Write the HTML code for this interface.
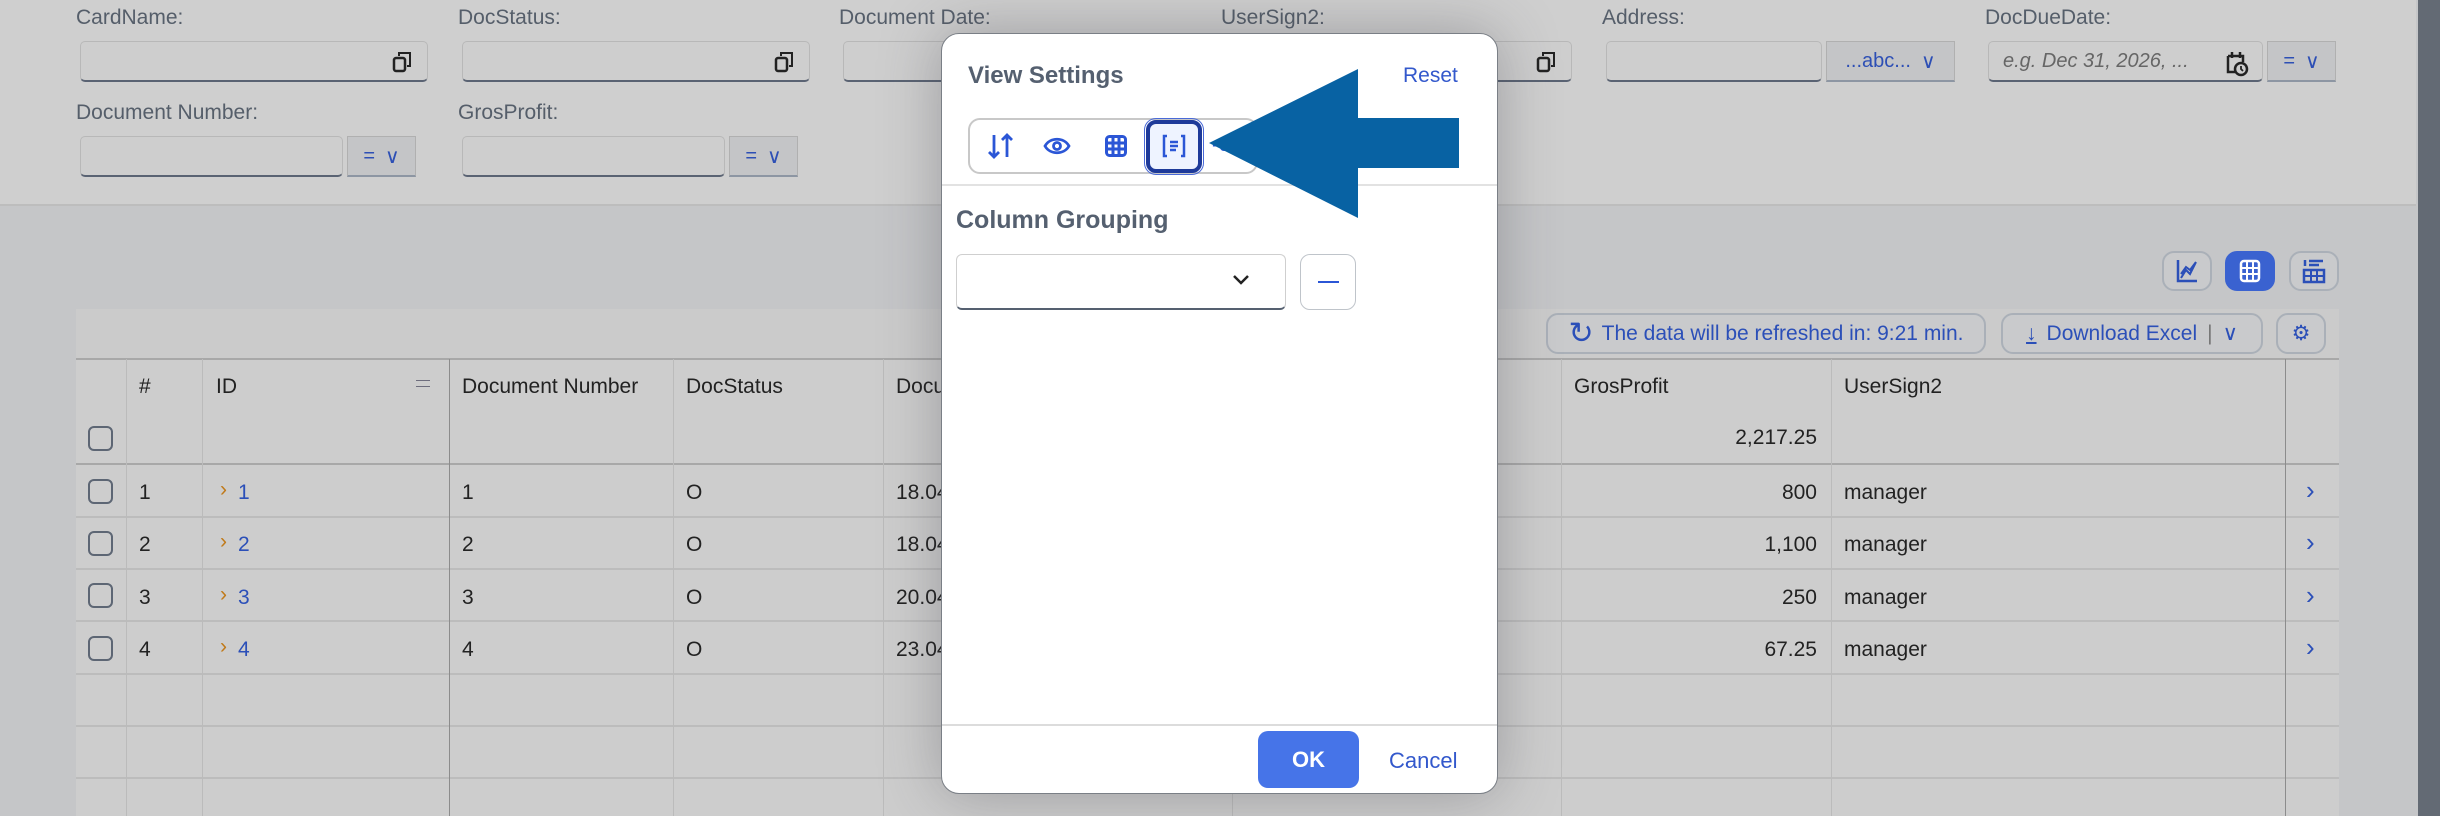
<!DOCTYPE html>
<html><head><meta charset="utf-8"><style>
*{box-sizing:border-box;margin:0;padding:0}
body{width:2440px;height:816px;overflow:hidden;position:relative;background:#c5c6c8;font-family:"Liberation Sans",sans-serif;font-size:21px;color:#222}
.a{position:absolute}
.lbl{position:absolute;color:#555e6a;font-size:21px;line-height:24px}
.inp{position:absolute;height:41px;border:1px solid #b8b8b8;border-bottom:2px solid #5a6373;border-radius:5px;background:#cecece}
.btn{position:absolute;height:41px;border:1px solid #b0b0b0;border-bottom:2px solid #8d96a3;background:#c4c5c7;color:#2d4fb5;font-size:20px;display:flex;align-items:center;justify-content:center;gap:10px}
.cell{position:absolute;line-height:24px}
.hl{position:absolute;height:2px;background:#bcbcbc}
.vl{position:absolute;width:1px;background:#bbb}
.cb{position:absolute;width:25px;height:25px;border:2px solid #5d6674;border-radius:6px}
.blue{color:#2b4fb8}
.tb{position:absolute;border:2px solid #aab0b8;border-radius:12px;background:#c9cacc;color:#2b4fb8;display:flex;align-items:center;justify-content:center;font-size:21px}
</style></head><body>
<!-- filter bar -->
<div class="a" style="left:0;top:0;width:2416px;height:206px;background:#cfcfcf;border-bottom:2px solid #bdbdbd"></div>
<div class="a" style="left:2418px;top:0;width:22px;height:816px;background:#636a74"></div>
<div class="lbl" style="left:76px;top:6px">CardName:</div>
<div class="inp" style="left:80px;top:41px;width:348px"></div>
<svg class="a" style="left:392px;top:50px" width="22" height="24" viewBox="0 0 22 24"><rect x="2" y="8" width="11" height="13" rx="2" fill="none" stroke="#222" stroke-width="2.5"/><path d="M7 6V3h11v13h-3" fill="none" stroke="#222" stroke-width="2"/></svg>
<div class="lbl" style="left:458px;top:6px">DocStatus:</div>
<div class="inp" style="left:462px;top:41px;width:348px"></div>
<svg class="a" style="left:774px;top:50px" width="22" height="24" viewBox="0 0 22 24"><rect x="2" y="8" width="11" height="13" rx="2" fill="none" stroke="#222" stroke-width="2.5"/><path d="M7 6V3h11v13h-3" fill="none" stroke="#222" stroke-width="2"/></svg>
<div class="lbl" style="left:839px;top:6px">Document Date:</div>
<div class="inp" style="left:843px;top:41px;width:348px"></div>
<div class="lbl" style="left:1221px;top:6px">UserSign2:</div>
<div class="inp" style="left:1225px;top:41px;width:347px"></div>
<svg class="a" style="left:1536px;top:50px" width="22" height="24" viewBox="0 0 22 24"><rect x="2" y="8" width="11" height="13" rx="2" fill="none" stroke="#222" stroke-width="2.5"/><path d="M7 6V3h11v13h-3" fill="none" stroke="#222" stroke-width="2"/></svg>
<div class="lbl" style="left:1602px;top:6px">Address:</div>
<div class="inp" style="left:1606px;top:41px;width:216px"></div>
<div class="btn" style="left:1826px;top:41px;width:129px">...abc... <span>&#8744;</span></div>
<div class="lbl" style="left:1985px;top:6px">DocDueDate:</div>
<div class="inp" style="left:1988px;top:41px;width:275px"></div>
<div class="a" style="left:2003px;top:50px;font-style:italic;color:#666;font-size:20px">e.g. Dec 31, 2026, ...</div>
<svg class="a" style="left:2224px;top:48px" width="26" height="30" viewBox="0 0 26 30"><path d="M4 8h15v6M4 8v16h7" fill="none" stroke="#222" stroke-width="2.5"/><path d="M8 4v6M16 4v6" stroke="#222" stroke-width="2.5"/><circle cx="17" cy="21" r="6" fill="none" stroke="#222" stroke-width="2.5"/><path d="M17 18v3l2 2" fill="none" stroke="#222" stroke-width="1.8"/></svg>
<div class="btn" style="left:2267px;top:41px;width:69px">= <span>&#8744;</span></div>
<div class="lbl" style="left:76px;top:101px">Document Number:</div>
<div class="inp" style="left:80px;top:136px;width:263px"></div>
<div class="btn" style="left:347px;top:136px;width:69px">= <span>&#8744;</span></div>
<div class="lbl" style="left:458px;top:101px">GrosProfit:</div>
<div class="inp" style="left:462px;top:136px;width:263px"></div>
<div class="btn" style="left:729px;top:136px;width:69px">= <span>&#8744;</span></div>

<!-- view buttons -->
<div class="tb" style="left:2162px;top:251px;width:50px;height:40px"><svg width="24" height="26" viewBox="0 0 24 26"><path d="M3 2v21h19" fill="none" stroke="#2b4fb8" stroke-width="2.5"/><path d="M6 20l5-8 4 4 6-12M6 16l5-7 4 3 6-8" fill="none" stroke="#2b4fb8" stroke-width="2"/></svg></div>
<div class="tb" style="left:2225px;top:251px;width:50px;height:40px;background:#3a62d0;border-color:#3a62d0"><svg width="22" height="24" viewBox="0 0 22 24"><rect x="2" y="2" width="18" height="20" rx="3" fill="none" stroke="#fff" stroke-width="2.5"/><path d="M8 3v18M14 3v18M3 9h16M3 15h16" stroke="#fff" stroke-width="2"/></svg></div>
<div class="tb" style="left:2289px;top:251px;width:50px;height:40px"><svg width="24" height="26" viewBox="0 0 24 26"><path d="M3 2v6M7 3h14M7 7h10" stroke="#2b4fb8" stroke-width="2.5"/><rect x="2" y="12" width="20" height="12" fill="none" stroke="#2b4fb8" stroke-width="2.5"/><path d="M9 12v12M15 12v12M2 18h20" stroke="#2b4fb8" stroke-width="2"/></svg></div>

<!-- table -->
<div class="a" style="left:76px;top:309px;width:2263px;height:50px;background:#cbcbcb"></div>
<div class="a" style="left:76px;top:359px;width:2263px;height:457px;background:#cdcdcd"></div>
<div class="tb" style="left:1546px;top:313px;width:440px;height:41px;gap:8px"><span style="font-size:30px">&#8635;</span>The data will be refreshed in: 9:21 min.</div>
<div class="tb" style="left:2001px;top:313px;width:262px;height:41px;gap:10px"><span style="text-decoration:underline">&#8595;</span>Download Excel <span style="color:#777">|</span> &#8744;</div>
<div class="tb" style="left:2276px;top:313px;width:50px;height:41px">&#9881;</div>
<div class="hl" style="left:76px;top:358px;width:2263px;background:#a8a8a8"></div>
<div class="hl" style="left:76px;top:463px;width:2263px;background:#a8a8a8"></div>
<div class="hl" style="left:76px;top:516px;width:2263px"></div>
<div class="hl" style="left:76px;top:568px;width:2263px"></div>
<div class="hl" style="left:76px;top:620px;width:2263px"></div>
<div class="hl" style="left:76px;top:673px;width:2263px"></div>
<div class="hl" style="left:76px;top:725px;width:2263px"></div>
<div class="hl" style="left:76px;top:777px;width:2263px"></div>
<div class="vl" style="left:126px;top:359px;height:457px"></div>
<div class="vl" style="left:202px;top:359px;height:457px"></div>
<div class="vl" style="left:449px;top:359px;height:457px;background:#8c8c8c"></div>
<div class="vl" style="left:673px;top:359px;height:457px"></div>
<div class="vl" style="left:883px;top:359px;height:457px"></div>
<div class="vl" style="left:1232px;top:359px;height:457px"></div>
<div class="vl" style="left:1561px;top:359px;height:457px"></div>
<div class="vl" style="left:1831px;top:359px;height:457px"></div>
<div class="vl" style="left:2285px;top:359px;height:457px;background:#8c8c8c"></div>
<div class="cell" style="left:139px;top:375px">#</div>
<div class="cell" style="left:216px;top:375px">ID</div>
<div class="a" style="left:416px;top:376px;color:#667;font-size:14px;line-height:6px">&#8212;<br>&#8212;</div>
<div class="cell" style="left:462px;top:375px">Document Number</div>
<div class="cell" style="left:686px;top:375px">DocStatus</div>
<div class="cell" style="left:896px;top:375px">Docu</div>
<div class="cell" style="left:1574px;top:375px">GrosProfit</div>
<div class="cell" style="left:1844px;top:375px">UserSign2</div>
<div class="cell" style="left:1700px;top:426px;width:117px;text-align:right">2,217.25</div>
<div class="cb" style="left:88px;top:426px"></div>
<!-- rows -->
<div class="cb" style="left:88px;top:479px"></div><div class="cell" style="left:139px;top:481px">1</div><div class="cell" style="left:220px;top:478px;color:#c07a1a">&#8250;</div><div class="cell blue" style="left:238px;top:481px">1</div><div class="cell" style="left:462px;top:481px">1</div><div class="cell" style="left:686px;top:481px">O</div><div class="cell" style="left:896px;top:481px">18.04</div><div class="cell" style="left:1700px;top:481px;width:117px;text-align:right">800</div><div class="cell" style="left:1844px;top:481px">manager</div><div class="cell blue" style="left:2306px;top:478px;font-size:26px">&#8250;</div>
<div class="cb" style="left:88px;top:531px"></div><div class="cell" style="left:139px;top:533px">2</div><div class="cell" style="left:220px;top:530px;color:#c07a1a">&#8250;</div><div class="cell blue" style="left:238px;top:533px">2</div><div class="cell" style="left:462px;top:533px">2</div><div class="cell" style="left:686px;top:533px">O</div><div class="cell" style="left:896px;top:533px">18.04</div><div class="cell" style="left:1700px;top:533px;width:117px;text-align:right">1,100</div><div class="cell" style="left:1844px;top:533px">manager</div><div class="cell blue" style="left:2306px;top:530px;font-size:26px">&#8250;</div>
<div class="cb" style="left:88px;top:583px"></div><div class="cell" style="left:139px;top:586px">3</div><div class="cell" style="left:220px;top:583px;color:#c07a1a">&#8250;</div><div class="cell blue" style="left:238px;top:586px">3</div><div class="cell" style="left:462px;top:586px">3</div><div class="cell" style="left:686px;top:586px">O</div><div class="cell" style="left:896px;top:586px">20.04</div><div class="cell" style="left:1700px;top:586px;width:117px;text-align:right">250</div><div class="cell" style="left:1844px;top:586px">manager</div><div class="cell blue" style="left:2306px;top:583px;font-size:26px">&#8250;</div>
<div class="cb" style="left:88px;top:636px"></div><div class="cell" style="left:139px;top:638px">4</div><div class="cell" style="left:220px;top:635px;color:#c07a1a">&#8250;</div><div class="cell blue" style="left:238px;top:638px">4</div><div class="cell" style="left:462px;top:638px">4</div><div class="cell" style="left:686px;top:638px">O</div><div class="cell" style="left:896px;top:638px">23.04</div><div class="cell" style="left:1700px;top:638px;width:117px;text-align:right">67.25</div><div class="cell" style="left:1844px;top:638px">manager</div><div class="cell blue" style="left:2306px;top:635px;font-size:26px">&#8250;</div>

<!-- dialog -->
<div class="a" style="left:941px;top:33px;width:557px;height:761px;background:#fff;border:1px solid #7a7f86;border-radius:18px;box-shadow:0 0 60px rgba(60,60,70,.35);overflow:hidden">
 <div class="a" style="left:26px;top:28px;font-size:24px;font-weight:bold;color:#556070">View Settings</div>
 <div class="a" style="left:461px;top:30px;font-size:21px;color:#3358cc">Reset</div>
 <div class="a" style="left:0;top:150px;width:557px;height:2px;background:#e2e2e2"></div>
 <div class="a" style="left:26px;top:84px;width:290px;height:56px;border:2px solid #c8c8c8;border-radius:12px"></div>
 <div class="a" style="left:204px;top:86px;width:56px;height:53px;border:4px solid #1e3a9a;outline:1px solid #4a6ad8;outline-offset:1px;border-radius:10px;background:#eef3ff"></div>
 <svg class="a" style="left:44px;top:98px" width="30" height="28" viewBox="0 0 30 28"><path d="M8 3v22M3 20l5 5 5-5M21 25V3M16 8l5-5 5 5" fill="none" stroke="#2b56d6" stroke-width="2.8"/></svg>
 <svg class="a" style="left:101px;top:101px" width="28" height="22" viewBox="0 0 28 22"><path d="M2 11C7 2 21 2 26 11C21 20 7 20 2 11Z" fill="none" stroke="#2b56d6" stroke-width="2.8"/><circle cx="14" cy="11" r="3.5" fill="none" stroke="#2b56d6" stroke-width="2.8"/></svg>
 <svg class="a" style="left:163px;top:101px" width="22" height="22" viewBox="0 0 22 22"><rect x="1.5" y="1.5" width="19" height="19" rx="3" fill="none" stroke="#2b56d6" stroke-width="3"/><path d="M8 2v18M14 2v18M2 8h18M2 14h18" stroke="#2b56d6" stroke-width="3"/><path d="M8 2v18M14 2v18" stroke="#2b56d6" stroke-width="1"/></svg>
 <svg class="a" style="left:219px;top:100px" width="26" height="24" viewBox="0 0 26 24"><path d="M6 2H3v20h3M20 2h3v20h-3M9 8h8M9 12h8M9 16h6" fill="none" stroke="#2b56d6" stroke-width="2.5"/></svg>
 <div class="a" style="left:270px;top:100px;color:#2b56d6;font-size:20px">-0</div>
 <div class="a" style="left:14px;top:172px;font-size:25px;font-weight:bold;color:#556070">Column Grouping</div>
 <div class="a" style="left:14px;top:220px;width:330px;height:56px;border:1px solid #cfcfcf;border-bottom:2px solid #556070;border-radius:6px"></div>
 <svg class="a" style="left:290px;top:240px" width="18" height="12" viewBox="0 0 18 12"><path d="M2 2l7 7 7-7" fill="none" stroke="#222" stroke-width="2.5"/></svg>
 <div class="a" style="left:358px;top:220px;width:56px;height:56px;border:1.5px solid #bfc4ca;border-radius:10px"></div>
 <div class="a" style="left:376px;top:247px;width:21px;height:2px;background:#2b56d6"></div>
 <div class="a" style="left:0;top:690px;width:557px;height:2px;background:#dcdcdc"></div>
 <div class="a" style="left:316px;top:697px;width:101px;height:57px;background:#4674e8;border-radius:10px;color:#fff;font-weight:bold;font-size:22px;display:flex;align-items:center;justify-content:center">OK</div>
 <div class="a" style="left:447px;top:714px;color:#3358cc;font-size:22px">Cancel</div>
</div>
<!-- arrow -->
<svg class="a" style="left:0;top:0" width="2440" height="816"><polygon points="1209,143 1358,69 1358,118 1459,118 1459,168 1358,168 1358,218" fill="#0862a3"/></svg>
</body></html>
